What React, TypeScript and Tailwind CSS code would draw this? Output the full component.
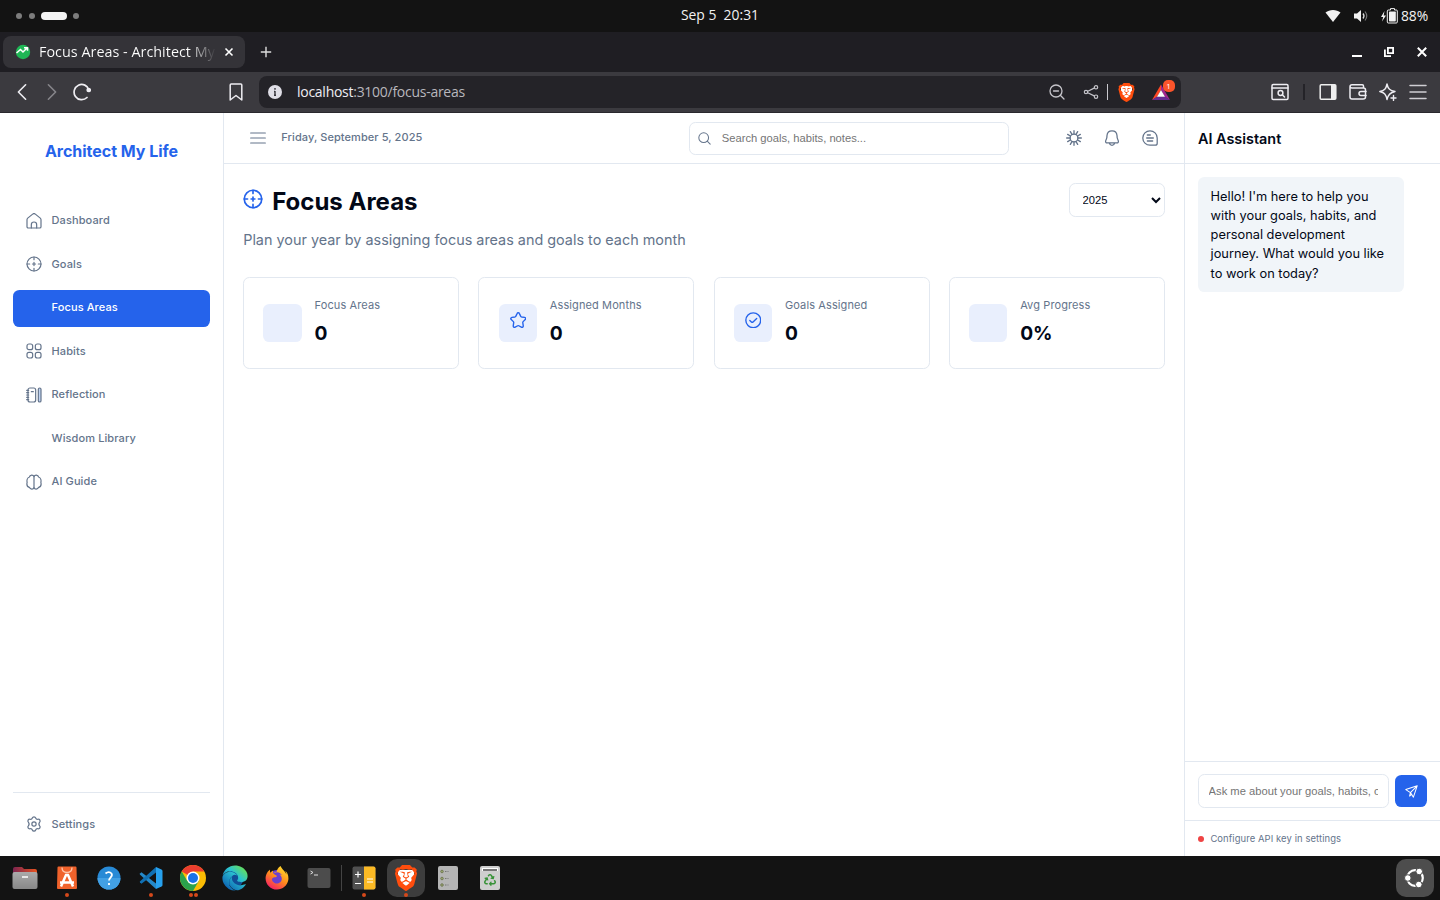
import React from "react";
import { SiBrave } from "react-icons/si";
import { FaEdge, FaFirefoxBrowser, FaRecycle } from "react-icons/fa";

type IconProps = { className?: string; children?: React.ReactNode; sw?: number; box?: string };

function Icon({ className = "size-4", children, sw = 1.5, box = "0 0 24 24" }: IconProps) {
  return (
    <svg viewBox={box} className={`shrink-0 ${className}`} fill="none" stroke="currentColor" strokeWidth={sw} strokeLinecap="round" strokeLinejoin="round">
      {children}
    </svg>
  );
}

const target = (
  <>
    <circle cx="12" cy="12" r="10.5" />
    <path d="M12 1.5v4M12 18.5v4M1.5 12h4M18.5 12h4M12 9.7v4.6M9.7 12h4.6" />
  </>
);
const house = (
  <>
    <path d="M3.500 22.500q-2 0-2-2V10c0-.9.4-1.700 1.100-2.300L10 1.700a3 3 0 0 1 4 0l7.400 6c.7.600 1.100 1.400 1.100 2.300v10.500q0 2-2 2z" />
    <path d="M8 22.500v-5a4 4 0 0 1 8 0v5" />
  </>
);
const habits = (
  <>
    <rect x="1.5" y="1.5" width="8.500" height="8.500" rx="3" />
    <rect x="14" y="1.5" width="8.500" height="8.500" rx="3" />
    <rect x="1.5" y="14" width="8.500" height="8.500" rx="3" />
    <rect x="14" y="14" width="8.500" height="8.500" rx="3" />
  </>
);
const journal = (
  <>
    <rect x="3" y="1.5" width="11.5" height="21" rx="3" />
    <path d="M1 5h3M1 8.500h3M1 12h3M1 15.500h3M1 19h3M8 7h3" />
    <rect x="18.500" y="1.500" width="4" height="21" rx="2" fill="#bfd3f3" />
  </>
);
const brain = (
  <>
    <path d="M12 3.500v17.500M12 4C11 .8 6 .8 5 4.500 2 5.500 1 9.500 1.700 12.500c-1 4 .8 6.800 3.300 7.500 1.500 3.500 6 3.500 7 .5" />
    <path d="M12 4c1-3.200 6-3.200 7 .5 3 1 4 5 3.300 8 1 4-.8 6.800-3.300 7.500-1.500 3.500-6 3.500-7 .5" />
  </>
);
const gear = (
  <>
    <circle cx="12" cy="12" r="3.200" />
    <path d="M9.500 3c.8-2.400 4.200-2.400 5 0 .5 1.500 2 2.200 3.500 1.900 2.500-.5 4.200 2.300 2.500 4.200-1.300 1.600-1.300 4.200 0 5.800 1.700 1.900 0 4.700-2.500 4.200-1.500-.3-3 .4-3.500 1.900-.8 2.400-4.200 2.400-5 0-.5-1.500-2-2.200-3.500-1.900-2.500.5-4.200-2.300-2.500-4.200 1.300-1.600 1.300-4.200 0-5.800C1.800 7.200 3.500 4.400 6 4.900c1.500.3 3-.4 3.500-1.900z" />
  </>
);

const nav: { label: string; icon?: React.ReactNode; active?: boolean }[] = [
  { label: "Dashboard", icon: house },
  { label: "Goals", icon: target },
  { label: "Focus Areas", active: true },
  { label: "Habits", icon: habits },
  { label: "Reflection", icon: journal },
  { label: "Wisdom Library" },
  { label: "AI Guide", icon: brain },
];

const stats: { label: string; value: string; icon?: React.ReactNode }[] = [
  { label: "Focus Areas", value: "0" },
  {
    label: "Assigned Months",
    value: "0",
    icon: <path d="M10.300 2.300c.6-1.500 2.800-1.500 3.400 0l1.900 4c.2.500.7.800 1.200.9l4.400.600c1.600.2 2.200 2 1 3.200l-3.100 3c-.4.400-.6.900-.5 1.500l.7 4.600c.2 1.600-1.400 2.700-2.800 1.900l-3.800-2a1.500 1.500 0 0 0-1.400 0l-3.800 2c-1.400.8-3-.3-2.800-1.900l.7-4.600c.1-.6-.1-1.100-.5-1.500l-3.100-3c-1.200-1.200-.6-3 1-3.200l4.400-.6c.5-.1 1-.4 1.200-.9z" />,
  },
  {
    label: "Goals Assigned",
    value: "0",
    icon: (
      <>
        <circle cx="12" cy="12" r="10.800" />
        <path d="M7 12.200l2.300 2.200c.7.700 1.700.7 2.400 0L17 9.500" />
      </>
    ),
  },
  { label: "Avg Progress", value: "0%" },
];

function TopBar() {
  return (
    <div className="flex h-8 shrink-0 items-center bg-[#131313] font-['Open_Sans',sans-serif] text-[13.900px] text-[#f2f2f2]">
      <div className="flex w-[600px] items-center pl-4">
        <span className="size-1.5 rounded-full bg-[#7d7d7d]" />
        <span className="ml-[7px] size-1.5 rounded-full bg-[#7d7d7d]" />
        <span className="ml-1.5 h-2 w-[26px] rounded-full bg-[#f4f4f4]" />
        <span className="ml-1.5 size-1.5 rounded-full bg-[#7d7d7d]" />
      </div>
      <div className="w-[240px] whitespace-pre pb-px text-center">Sep 5  20:31</div>
      <div className="flex flex-1 items-center justify-end pr-[11px]">
        <svg viewBox="0 0 16 16" className="size-4" fill="#f2f2f2"><path d="M.5 4.500C4.500 1 11.500 1 15.500 4.500L8 14z" /></svg>
        <svg viewBox="0 0 16 16" className="ml-3 size-4" fill="#f2f2f2">
          <path d="M1 5.500h3L8 2v12l-4-3.500H1z" />
          <path d="M10 5.500q2 2.500 0 5" fill="none" stroke="#ddd" strokeWidth="1.300" />
          <path d="M12 3.500q3.500 4.500 0 9" fill="none" stroke="#777" strokeWidth="1.200" />
        </svg>
        <svg viewBox="0 0 18 16" className="ml-[11px] h-4 w-[18px]" fill="#f2f2f2">
          <path d="M4.500 3L1 9h2.200L2 13.500 6 7.500H3.700z" />
          <path d="M8.500 2h2V.6h4V2h2q.8 0 .8 1v11q0 1-1 1h-8q-1 0-1-1V3q0-1 1.200-1z" fill="none" stroke="#f2f2f2" />
          <rect x="9" y="3.500" width="6.800" height="10" rx=".7" />
        </svg>
        <span className="ml-[3px] w-[28px] tracking-[-0.100px]">88%</span>
      </div>
    </div>
  );
}

function Tabs() {
  return (
    <div className="flex h-10 shrink-0 items-center bg-[#1f1e23] px-[3px] text-white">
      <div className="flex h-8 w-[242px] items-center rounded-[8px] bg-[#343338] pl-3">
        <svg viewBox="0 0 16 16" className="size-4">
          <circle cx="8" cy="8" r="7.200" fill="#1fb655" />
          <path d="M1.500 9L5.500 5.500 8 8l4-4M9 3.800h3.500v3" fill="none" stroke="#fff" strokeWidth="1.500" />
        </svg>
        <span className="ml-2 w-[177px] bg-linear-to-r from-white from-84% to-transparent to-100% bg-clip-text font-['Open_Sans',sans-serif] text-[14.400px] whitespace-nowrap text-transparent">Focus Areas - Architect My</span>
        <svg viewBox="0 0 10 10" className="ml-2 size-2.5" stroke="#fff" strokeWidth="1.600"><path d="M1.500 1.500l7 7M8.500 1.500l-7 7" /></svg>
      </div>
      <svg viewBox="0 0 12 12" className="ml-[15px] size-3" stroke="#ddd" strokeWidth="1.400"><path d="M6 .8v10.400M.8 6h10.400" /></svg>
      <div className="flex flex-1 items-center justify-end pr-[10px]">
        <svg viewBox="0 0 10 10" className="size-2.5" stroke="#fff" strokeWidth="2"><path d="M0 9h10" /></svg>
        <svg viewBox="0 0 10 10" className="ml-[22px] size-2.5" fill="none" stroke="#fff" strokeWidth="1.800"><path d="M3.900.9h5.200v5.200H3.900zM.9 2.500v6.600H7" /></svg>
        <svg viewBox="0 0 10 10" className="ml-[23px] size-2.5" stroke="#fff" strokeWidth="2"><path d="M.8.8l8.400 8.400M9.200.8L.8 9.200" /></svg>
      </div>
    </div>
  );
}

function BraveShield({ className }: { className: string }) {
  return (
    <span className={`grid shrink-0 place-items-center ${className}`}>
      <span className="col-start-1 row-start-1 h-[65%] w-[60%] rounded-b-full bg-white" />
      <SiBrave className="z-10 col-start-1 row-start-1 size-full text-[#ff4d0d]" />
    </span>
  );
}

function Toolbar() {
  return (
    <div className="flex h-[41px] shrink-0 items-center border-b border-[#29282d] bg-[#3b3a3f] text-[#eeedf2]">
      <div className="flex w-[259px] items-center pl-[13px]">
        <Icon className="size-[18px]" sw={1.800} box="0 0 20 20"><path d="M14 2L6 10l8 8" /></Icon>
        <Icon className="ml-3 size-[18px] text-[#86858a]" sw={1.800} box="0 0 20 20"><path d="M6 2l8 8-8 8" /></Icon>
        <Icon className="ml-3 size-[18px]" sw={1.700} box="0 0 18 18"><path d="M14 14.500A7.600 7.600 0 1 1 16 7" /><circle cx="15.700" cy="7" r="1.500" fill="currentColor" /></Icon>
        <Icon className="ml-[136px] size-[18px]" sw={1.500} box="0 0 18 18"><path d="M3.200 2q0-1 1-1h9.600q1 0 1 1v15L9 12.500 3.200 17z" /></Icon>
      </div>
      <div className="flex h-8 w-[922px] items-center rounded-[8px] bg-[#242328] pl-[9px]">
        <svg viewBox="0 0 14 14" className="size-3.5"><circle cx="7" cy="7" r="7" fill="#dfdee6" /><path d="M7 6v4.500M7 3v1.700M6 6.500h1M6 10.200h2" stroke="#35343a" strokeWidth="1.400" /></svg>
        <div className="ml-[15px] w-[760px] pb-px font-['Open_Sans',sans-serif] text-[14px] tracking-[-0.270px] text-[#b8b7bd]"><span className="text-[#efeef3]">localhost</span>:3100/focus-areas</div>
        <Icon className="-ml-[8px] size-4 text-[#c5c4ca]" sw={1.300} box="0 0 16 16"><circle cx="7" cy="7" r="6" /><path d="M4.500 7h5M11.300 11.300L15 15" /></Icon>
        <Icon className="ml-[18px] size-4 text-[#c5c4ca]" sw={1.200} box="0 0 16 16"><circle cx="3" cy="8" r="1.700" /><circle cx="13" cy="3.300" r="1.700" /><circle cx="13" cy="12.700" r="1.700" /><path d="M4.800 7.200L11.200 4.100M4.800 8.800l6.400 3.100" /></Icon>
        <span className="ml-2 h-4 w-px bg-[#c9c8ce]" />
        <BraveShield className="ml-[9px] size-[19px]" />
        <span className="relative ml-[15.500px] size-[18px]">
          <svg viewBox="0 0 18 18" className="size-[18px]"><path d="M9 1.500L0 17l5-3L9 7z" fill="#ff4724" /><path d="M9 1.500L18 17l-5-3L9 7z" fill="#a3278f" /><path d="M0 17h18l-5-3.500H5z" fill="#662d91" /><path d="M9 7l4 6.700H5z" fill="#fff" /></svg>
          <span className="absolute -top-[3px] left-[11px] flex size-3 items-center justify-center rounded-[5px] bg-[#fb542b] font-['Open_Sans',sans-serif] text-[8px] text-white">1</span>
        </span>
      </div>
      <div className="flex flex-1 items-center justify-end pr-[13px]">
        <Icon className="size-[18px]" sw={1.500} box="0 0 18 18"><rect x="1" y="1.500" width="16" height="15" rx="1.200" /><path d="M1 5h16M11.500 12l2 2" /><circle cx="9.500" cy="10" r="2.400" /></Icon>
        <span className="ml-[14px] h-4 w-0.5 bg-[#242328]" />
        <svg viewBox="0 0 18 18" className="ml-[14px] size-[18px]"><rect x="1.200" y="1.700" width="15.600" height="14.600" rx="1" fill="none" stroke="#eee" strokeWidth="1.500" /><path d="M12 2h5v14h-5z" fill="#eee" /></svg>
        <Icon className="ml-3 size-[18px]" sw={1.500} box="0 0 18 18"><path d="M14.500 5V3q0-1.200-1.200-1.200H3Q1 1.800 1 3.800V14q0 2 2 2h11q2.500 0 2.500-2V7q0-2-2-2H3Q1 5 1 3.500" /><path d="M17 8.500h-5q-2 0-2 2t2 2h5" /></Icon>
        <Icon className="ml-3 size-[18px]" sw={1.400} box="0 0 18 18"><path d="M8 1C9 6 11 7.500 16 8.500 11 9.500 9 11.500 8 16.500 7 11.500 5.500 9.500.8 8.500 5.500 7.500 7 6 8 1z" /><path d="M14.500 12.500v5M12 15h5" /></Icon>
        <Icon className="ml-3 size-[18px] text-[#cfced3]" sw={1.500} box="0 0 18 18"><path d="M1 2.500h16M1 9h16M1 15.500h16" /></Icon>
      </div>
    </div>
  );
}

function Sidebar() {
  return (
    <aside className="flex w-56 shrink-0 flex-col border-r border-[#e2e8f0] px-[13px]">
      <div className="mt-[26px] text-center text-base leading-6 font-bold tracking-[-0.020px] text-[#2563eb]">Architect My Life</div>
      <nav className="mt-10 flex flex-col gap-[6.450px]">
        {nav.map((n) => (
          <div key={n.label} className={n.active ? "flex h-[37.100px] items-center gap-[10px] rounded-[6.400px] bg-[#2563eb] px-[12.500px] text-white" : "flex h-[37.100px] items-center gap-[10px] px-[12.500px] text-[#64748b]"}>
            {n.icon ? <Icon className="mb-[1.500px] size-4" sw={1.800}>{n.icon}</Icon> : <span className="size-4" />}
            <span className="pb-[2.600px] text-[11px] leading-4 font-medium tracking-[0.110px]">{n.label}</span>
          </div>
        ))}
      </nav>
      <div className="mt-auto border-t border-[#e2e8f0] pt-[12.500px] pb-[13.500px]">
        <div className="flex h-[37px] items-center gap-[10px] px-[12.500px] text-[#64748b]">
          <Icon className="size-4" sw={1.800}>{gear}</Icon>
          <span className="text-[11px] leading-4 font-medium tracking-[0.110px]">Settings</span>
        </div>
      </div>
    </aside>
  );
}

function Main() {
  return (
    <main className="flex w-[960px] shrink-0 flex-col">
      <header className="flex h-[51px] items-center border-b border-[#e2e8f0] text-[#64748b]">
        <Icon className="ml-[26px] size-4" sw={1.800}><path d="M1 4.500h22M1 12h22M1 19.500h22" /></Icon>
        <span className="ml-[15.300px] w-[408px] pb-0.5 text-[11px] font-medium tracking-[0.080px]">Friday, September 5, 2025</span>
        <div className="flex h-[33px] w-80 items-center gap-[10.500px] rounded-[6.400px] border border-[#e2e8f0] px-2">
          <Icon className="size-[13px]" sw={1.900}><circle cx="10.500" cy="10.500" r="9" /><path d="M17.500 17.500l5 5" /></Icon>
          <input className="w-full font-['Liberation_Sans',Arial,sans-serif] text-[11.200px] outline-none placeholder:text-[#757575]" placeholder="Search goals, habits, notes..." />
        </div>
        <Icon className="ml-[56.700px] size-4" sw={2}><circle cx="12" cy="12" r="5.800" /><path d="M12 1v5M12 18v5M1 12h5M18 12h5M6.500 2.500l2.500 4M17.500 2.500l-2.500 4M6.500 21.500l2.500-4M17.500 21.500l-2.500-4M2.500 6.500l4 2.500M2.500 17.500l4-2.500M21.500 6.500l-4 2.500M21.500 17.500l-4-2.500" /></Icon>
        <Icon className="ml-[22px] size-4" sw={1.900}><path d="M12 1.200c-4.500 0-7.200 3-7.500 7l-.3 3.600-1.700 4.500c-.5 1.700.4 3 2.200 3h14.600c1.800 0 2.700-1.300 2.200-3l-1.700-4.500-.3-3.600c-.3-4-3-7-7.500-7zM8 19.500q1 3.500 4 3.500t4-3.500" /></Icon>
        <Icon className="ml-[22.500px] size-4" sw={1.900}><path d="M12 1.200a10.800 10.800 0 1 0 0 21.600h7.800q3 0 3-3V12A10.800 10.800 0 0 0 12 1.200zM8 7.500h4.500M7 12h10M8 16.500h8" /></Icon>
      </header>
      <section className="flex flex-col px-[19.200px] pt-[19px]">
        <div className="flex h-[34px] items-center">
          <Icon className="mb-[2px] size-[20px] text-[#2563eb]" sw={2}>{target}</Icon>
          <h1 className="ml-[9px] pt-1 text-[24px] leading-[30px] font-bold text-[#020817]">Focus Areas</h1>
          <select className="ml-auto h-[34px] w-24 rounded-[6.400px] border border-[#e2e8f0] bg-white px-[8.800px] font-['Liberation_Sans',Arial,sans-serif] text-[11.200px] text-[#020817]" defaultValue="2025">
            <option>2025</option>
          </select>
        </div>
        <p className="mt-3 text-[14.400px] leading-[22px] text-[#64748b]">Plan your year by assigning focus areas and goals to each month</p>
        <div className="mt-[26px] grid grid-cols-4 gap-[19.200px]">
          {stats.map((s) => (
            <div key={s.label} className="flex h-[92px] items-center gap-[12.800px] rounded-[6.400px] border border-[#e2e8f0] px-[19.200px]">
              <div className="flex size-[38.400px] justify-center rounded-[6.400px] bg-[#e9effd] pt-[7.800px] text-[#2563eb]">
                {s.icon && <Icon className="size-[16.500px]" sw={2}>{s.icon}</Icon>}
              </div>
              <div className="flex flex-col pb-[3px]">
                <span className="text-[11px] leading-4 tracking-[0.110px] text-[#64748b]">{s.label}</span>
                <span className="mt-[6px] text-[19.200px] leading-7 font-bold text-[#020817]">{s.value}</span>
              </div>
            </div>
          ))}
        </div>
      </section>
    </main>
  );
}

function Assistant() {
  return (
    <aside className="flex flex-1 flex-col border-l border-[#e2e8f0]">
      <h2 className="flex h-[51px] items-center border-b border-[#e2e8f0] px-[13px] pt-px text-[14.400px] font-semibold text-[#020817]">AI Assistant</h2>
      <div className="flex-1 px-[13px] pt-[13px]">
        <p className="h-[115px] w-[206px] rounded-[6.400px] bg-[#f1f5f9] px-[12.600px] pt-[9.800px] text-[12.800px] leading-[19.200px] text-[#020817]">Hello! I'm here to help you with your goals, habits, and personal development journey. What would you like to work on today?</p>
      </div>
      <div className="flex h-[59px] items-center gap-1.5 border-t border-[#e2e8f0] px-[13px]">
        <input className="h-[34px] w-[191px] rounded-[6.400px] border border-[#e2e8f0] px-[9.600px] font-['Liberation_Sans',Arial,sans-serif] text-[11.200px] outline-none placeholder:text-[#757575]" placeholder="Ask me about your goals, habits, or anything else..." />
        <button className="flex size-8 items-center justify-center rounded-[6.400px] bg-[#2563eb] text-white">
          <Icon className="size-[13px]" sw={1.900}><path d="M22.500 1.500L1.500 8.500l8.500 5.500 5.500 8.500zM22.500 1.500L10 14l-1.500 6.500 4-3.500" /></Icon>
        </button>
      </div>
      <div className="flex h-[36px] items-center gap-[6.400px] border-t border-[#e2e8f0] px-[13px] text-[9.450px] tracking-[0.080px] text-[#64748b]">
        <span className="size-1.5 rounded-full bg-[#ef4444]" />
        <span className="pt-px">Configure API key in settings</span>
      </div>
    </aside>
  );
}

function DockItem({ children, dots = 0, active }: { children: React.ReactNode; dots?: number; active?: boolean }) {
  return (
    <div className={active ? "relative flex h-[38px] w-[38px] items-center justify-center rounded-[10px] bg-[#3d3d3d]" : "relative flex h-[38px] w-[38px] items-center justify-center"}>
      {children}
      {dots > 0 && (
        <div className="absolute inset-x-0 bottom-0 flex justify-center gap-px">
          <span className="size-1 rounded-full bg-[#d5491b]" />
          {dots > 1 && <span className="size-1 rounded-full bg-[#d5491b]" />}
        </div>
      )}
    </div>
  );
}

function Dock() {
  return (
    <footer className="flex h-11 shrink-0 items-center gap-1 bg-[#131313] px-1.5">
      <DockItem>
        <svg viewBox="0 0 26 26" className="size-[26px]">
          <defs><linearGradient id="fold"><stop stopColor="#7c2450" /><stop offset="1" stopColor="#e95420" /></linearGradient><linearGradient id="gray" x2="0" y2="1"><stop stopColor="#aaa" /><stop offset="1" stopColor="#888" /></linearGradient></defs>
          <path d="M1 4q0-2 2-2h7l2 2h11q2 0 2 2v8H1z" fill="url(#fold)" /><rect x=".5" y="7" width="25" height="17" rx="2" fill="url(#gray)" /><path d="M10 12h6" stroke="#fff" strokeWidth="1.500" />
        </svg>
      </DockItem>
      <DockItem dots={1}>
        <svg viewBox="0 0 24 26" className="h-[26px] w-6"><path d="M2.500 2.500q0-1 1-1h17q1 0 1 1L22 23q0 1-1 1H3q-1 0-1-1z" fill="#f0622b" /><path d="M7 2.500q0 5 5 5t5-5" fill="none" stroke="#ffc7ad" strokeWidth="1.300" /><path d="M6 21.500L11 10h2l5 11.500M5 17.500h14" fill="none" stroke="#fff" strokeWidth="2.500" /></svg>
      </DockItem>
      <DockItem>
        <svg viewBox="0 0 24 24" className="size-6"><circle cx="12" cy="12" r="11.500" fill="#288ad6" /><path d="M.5 12a11.500 11.500 0 0 0 23 0z" fill="#42a0e4" /><path d="M8.500 7.500q3.500-2.800 6 0c2 3-2.500 4-2.500 7M12 17v2" fill="none" stroke="#fff" strokeWidth="1.800" /></svg>
      </DockItem>
      <DockItem dots={1}>
        <svg viewBox="0 0 24 24" className="size-6"><path d="M1 7.500l1.500-1.200L17 17.500V23L.8 8.500z" fill="#2489ca" /><path d="M1 16.500l1.500 1.200L17 6.500V1L.8 15.500z" fill="#1070b3" /><path d="M17 1l5.500 2.500q1 .5 1 1.500v14q0 1-1 1.500L17 23z" fill="#27a1ee" /></svg>
      </DockItem>
      <DockItem dots={2}>
        <svg viewBox="0 0 26 26" className="size-[26px]">
          <circle cx="13" cy="13" r="13" fill="#fbbc04" />
          <path d="M13 13L1.740 6.500A13 13 0 0 1 24.260 6.500H13z" fill="#ea3d2f" />
          <path d="M1.740 6.500A13 13 0 0 0 13 26l5.600-9.700L13 13 7.400 16.300z" fill="#2ba24c" />
          <circle cx="13" cy="13" r="6.500" fill="#fff" /><circle cx="13" cy="13" r="5" fill="#1a73e8" />
        </svg>
      </DockItem>
      <DockItem>
        <svg viewBox="0 0 1 1" className="absolute size-0"><defs><linearGradient id="edge" x1="0.900" y1="0.200" x2="0.200" y2="1"><stop stopColor="#5edb68" /><stop offset=".35" stopColor="#2bc3d2" /><stop offset="1" stopColor="#0b5cb0" /></linearGradient><linearGradient id="fox" x1=".8" y1="0" x2=".2" y2="1"><stop stopColor="#ffe02f" /><stop offset=".5" stopColor="#ff8a1c" /><stop offset="1" stopColor="#f5156c" /></linearGradient></defs></svg>
        <span className="grid size-[26px] place-items-center"><span className="col-start-1 row-start-1 size-[18px] rounded-full bg-[#114f97]" /><FaEdge className="z-10 col-start-1 row-start-1 size-[26px]" fill="url(#edge)" /></span>
      </DockItem>
      <DockItem>
        <span className="grid size-6 place-items-center"><span className="col-start-1 row-start-1 size-4 rounded-full bg-[#6b3fd0]" /><FaFirefoxBrowser className="z-10 col-start-1 row-start-1 size-6" fill="url(#fox)" /></span>
      </DockItem>
      <DockItem>
        <svg viewBox="0 0 24 22" className="h-[22px] w-6"><rect x=".5" y="1" width="23" height="20" rx="2" fill="#4c4c4c" /><path d="M3.500 4l2.500 1.500L3.500 7M7 8h4" fill="none" stroke="#ddd" /></svg>
      </DockItem>
      <span className="-mr-px -ml-px h-[26px] w-px bg-[#444]" />
      <DockItem dots={1}>
        <svg viewBox="0 0 24 24" className="size-6"><rect x=".5" y=".5" width="23" height="23" rx="2" fill="#505050" /><path d="M12 .5h9.500q2 0 2 2v19q0 2-2 2H12z" fill="#fbb924" /><path d="M3 8.500h6M6 5.500v6M3 17.500h6M15 13h6M15 16h6" stroke="#fff" strokeWidth="1.200" /></svg>
      </DockItem>
      <DockItem active dots={1}><BraveShield className="size-[26px]" /></DockItem>
      <DockItem>
        <svg viewBox="0 0 22 26" className="h-[26px] w-[22px]"><rect x="1" y="1" width="20" height="24" rx="2" fill="#b5b5b5" /><g fill="#9aa66f" stroke="#68704b" strokeWidth=".8"><circle cx="5" cy="6.500" r="1.300" /><circle cx="5" cy="13.500" r="1.300" /><circle cx="5" cy="20" r="1.300" /></g><path d="M8 6.500h3.500M8 13.500h3.500M8 20h3.500" stroke="#777" strokeDasharray="1.500 1" /></svg>
      </DockItem>
      <DockItem>
        <span className="flex h-6 w-5 flex-col items-center rounded-[2px] bg-[#cfcfcf] pt-[2px]"><span className="h-[3px] w-4 border-x border-t border-white bg-[#777]" /><FaRecycle className="mt-[3px] size-[12px] text-[#379237]" /></span>
      </DockItem>
      <div className="ml-auto flex size-[38px] items-center justify-center rounded-[10px] bg-[#4d4d4d]">
        <svg viewBox="0 0 22 22" className="size-[22px]"><circle cx="11" cy="11" r="7.800" fill="none" stroke="#fff" strokeWidth="2.200" /><g fill="#fff" stroke="#4d4d4d"><circle cx="3.800" cy="11" r="3.300" /><circle cx="15.200" cy="4.500" r="3.300" /><circle cx="14.800" cy="17.500" r="3.300" /></g></svg>
      </div>
    </footer>
  );
}

export default function App() {
  return (
    <div className="flex h-[900px] w-[1440px] flex-col overflow-hidden bg-white font-['Inter',sans-serif]">
      <TopBar />
      <Tabs />
      <Toolbar />
      <div className="flex min-h-0 flex-1">
        <Sidebar />
        <Main />
        <Assistant />
      </div>
      <Dock />
    </div>
  );
}
